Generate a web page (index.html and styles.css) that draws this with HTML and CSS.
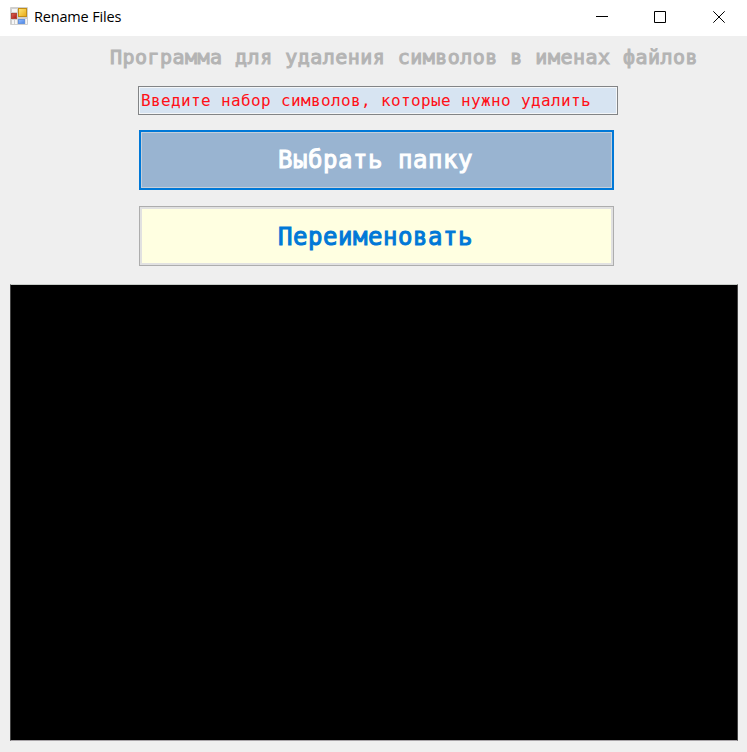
FILE: index.html
```html
<!DOCTYPE html>
<html lang="ru">
<head>
<meta charset="utf-8">
<title>Rename Files</title>
<link rel="stylesheet" href="styles.css">
</head>
<body>
<div class="window">
  <header class="titlebar">
    <svg class="app-icon" width="18" height="18" viewBox="0 0 18 18">
      <defs>
        <linearGradient id="gold" x1="0" y1="0" x2="1" y2="1"><stop offset="0" stop-color="#ffe878"/><stop offset="1" stop-color="#e8a814"/></linearGradient>
        <linearGradient id="blue" x1="0" y1="0" x2="1" y2="1"><stop offset="0" stop-color="#94bcff"/><stop offset="1" stop-color="#4a84e4"/></linearGradient>
        <linearGradient id="red" x1="0" y1="0" x2="1" y2="1"><stop offset="0" stop-color="#e06858"/><stop offset="1" stop-color="#a81414"/></linearGradient>
      </defs>
      <rect width="18" height="18" rx="1" fill="#cfcfcf"/>
      <path fill="#f6f6f6" d="M2 2h5v3H2zM2 13h2v4H2zM5 13h2v4H5zM15.500 12h1.500v5h-1.500z"/>
      <rect x="8.500" y="1.500" width="8" height="8" fill="url(#gold)" stroke="#c28d16"/>
      <rect x="1.500" y="6.500" width="5" height="5" fill="url(#red)" stroke="#b34539"/>
      <rect x="8.500" y="12.500" width="6" height="4" fill="url(#blue)" stroke="#6594df"/>
    </svg>
    <span class="title">Rename Files</span>
    <div class="controls">
      <svg width="12" height="12" viewBox="0 0 12 12"><path d="M0 5.500h12"/></svg>
      <svg width="12" height="12" viewBox="0 0 12 12"><path d="M.5.5h11v11H.5z"/></svg>
      <svg width="12" height="12" viewBox="0 0 12 12"><path d="M.3.3l11.400 11.400M11.700.3L.3 11.700"/></svg>
    </div>
  </header>
  <main class="form">
    <h1 class="heading">Программа для удаления символов в именах файлов</h1>
    <div class="field">Введите набор символов, которые нужно удалить</div>
    <button class="button choose">Выбрать папку</button>
    <button class="button rename">Переименовать</button>
    <div class="output"></div>
  </main>
</div>
</body>
</html>
```
FILE: styles.css
```css
* { box-sizing: border-box; }
body { margin: 0; }
.window {
  width: 747px;
  height: 752px;
  display: flex;
  flex-direction: column;
  background: #efefef;
  font-family: "DejaVu Sans Mono", monospace;
  overflow: hidden;
}
.titlebar {
  height: 36px;
  flex: none;
  display: flex;
  align-items: flex-start;
  padding: 7px 22px 0 10px;
  background: #fff;
}
.title {
  margin-left: 6px;
  font: 14.5px/20px "Open Sans", sans-serif;
  letter-spacing: -0.17px;
  color: #000;
}
.controls {
  display: flex;
  margin: 4px 0 0 auto;
}
.controls svg { fill: none; stroke: #000; stroke-width: 1; }
.controls svg:nth-child(1) { margin-right: 46px; }
.controls svg:nth-child(2) { margin-right: 47px; }
.form {
  flex: 1;
  display: flex;
  flex-direction: column;
  align-items: flex-start;
}
.heading {
  margin: 7px 0 0 110px;
  font-size: 20px;
  font-weight: 400;
  line-height: 28px;
  letter-spacing: 0.47px;
  white-space: nowrap;
  color: #b4b4b4;
  -webkit-text-stroke: 1px #b4b4b4;
}
.field {
  width: 480px;
  height: 29px;
  margin: 15px 0 0 138px;
  padding-left: 2px;
  border: 1px solid #828486;
  box-shadow: inset 0 0 0 1px #f4f6f8;
  background: #d7e4f2;
  color: #ff1018;
  font-size: 16px;
  line-height: 27px;
  letter-spacing: 0.37px;
  white-space: nowrap;
}
.button {
  width: 475px;
  height: 60px;
  margin: 15px 0 0 139px;
  padding: 0 2px 0 0;
  font: 24px/56px "DejaVu Sans Mono", monospace;
  letter-spacing: 0.56px;
  -webkit-text-stroke: 1px currentColor;
}
.choose {
  border: 2px solid #0078d7;
  box-shadow: inset 0 0 0 1px #c5cfda;
  background: #99b4d1;
  color: #fff;
}
.rename {
  margin-top: 16px;
  padding-top: 2px;
  border: 1px solid #adadad;
  box-shadow: inset 0 0 0 2px #e1e1e1;
  background: #ffffe1;
  color: #0078d7;
}
.output {
  width: 728px;
  height: 457px;
  margin: 18px 0 0 10px;
  border: 1px solid #444;
  border-top-color: #c8ccc8;
  border-bottom-color: #a8a4a8;
  background: #000;
}
```
